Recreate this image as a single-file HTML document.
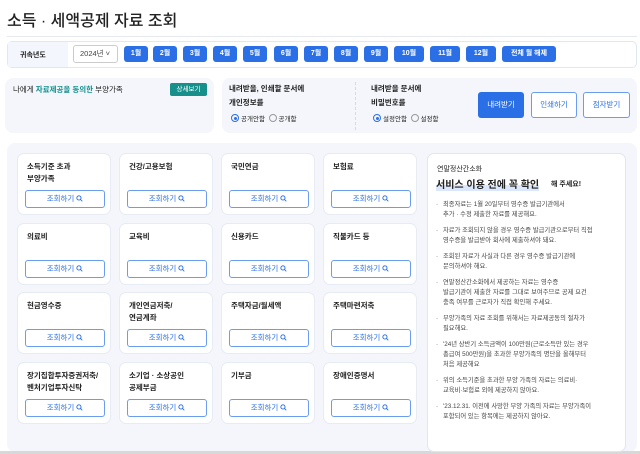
<!DOCTYPE html>
<html><head><meta charset="utf-8"><style>
*{box-sizing:border-box;margin:0;padding:0}
body{width:640px;height:454px;background:#fff;font-family:"Liberation Sans","Noto Sans CJK KR",sans-serif;color:#222;position:relative;overflow:hidden}
.a{position:absolute}
.t{font-size:16px;font-weight:500;left:7px;top:7px}
.hr{left:7px;right:3px;top:36px;height:1px;background:#e6e9ef}
.bar{left:7px;top:41px;width:630px;height:27px;border:1px solid #e0e6f2;border-radius:5px;background:#fff}
.barl{left:8px;top:42px;width:60px;height:25px;background:#f3f6fc}
.mb{top:46px;height:16px;background:#2a6fe6;color:#fff;font-size:7px;font-weight:bold;border-radius:3px;text-align:center;line-height:16px}
.pan{background:#f4f6fb;border-radius:8px}
.card{background:#fff;border-radius:7px;width:94px;height:62px;border:1px solid #e6ebf4}
.card .n{position:absolute;left:9px;top:7px;font-size:7.5px;font-weight:600;line-height:12px}
.card .b{position:absolute;left:7px;top:36px;width:80px;height:18px;border:1px solid #6a9cf0;border-radius:3px;color:#2a6fe6;font-size:7.5px;text-align:center;line-height:16px}
.card .b svg{vertical-align:-1px;margin-left:2px}
.r{display:inline-block;width:8px;height:8px;border:1px solid #999;border-radius:50%;vertical-align:-1px;margin-right:2px;position:relative}
.r.on{border-color:#2a6fe6}
.r.on:after{content:"";position:absolute;left:1.5px;top:1.5px;width:3px;height:3px;border-radius:50%;background:#2a6fe6}
.ul li{list-style:none;font-size:6.3px;color:#444;line-height:10px;margin-bottom:6px;padding-left:7px;position:relative}
.ul li:before{content:"·";position:absolute;left:0}
</style></head><body>
<svg width="0" height="0" style="position:absolute"><defs><symbol id="q" viewBox="0 0 10 10"><circle cx="4.2" cy="4.2" r="3" fill="none" stroke="#2a6fe6" stroke-width="1.3"/><path d="M6.4 6.4L9 9" stroke="#2a6fe6" stroke-width="1.3"/></symbol></defs></svg>
<div class="a t">소득 · 세액공제 자료 조회</div>
<div class="a hr"></div>
<div class="a bar"></div>
<div class="a barl"></div>
<div class="a" style="left:20px;top:50px;font-size:7px;font-weight:bold">귀속년도</div>
<div class="a" style="left:73px;top:45px;width:45px;height:18px;border:1px solid #ccc;border-radius:3px;font-size:7.5px;line-height:16px;padding-left:6px;color:#444">2024년 ˅</div>
<div class="a mb" style="left:124px;width:24px">1월</div>
<div class="a mb" style="left:153px;width:24px">2월</div>
<div class="a mb" style="left:183px;width:24px">3월</div>
<div class="a mb" style="left:213px;width:24px">4월</div>
<div class="a mb" style="left:243px;width:24px">5월</div>
<div class="a mb" style="left:274px;width:24px">6월</div>
<div class="a mb" style="left:304px;width:24px">7월</div>
<div class="a mb" style="left:334px;width:24px">8월</div>
<div class="a mb" style="left:364px;width:24px">9월</div>
<div class="a mb" style="left:394px;width:30px">10월</div>
<div class="a mb" style="left:430px;width:30px">11월</div>
<div class="a mb" style="left:466px;width:30px">12월</div>
<div class="a mb" style="left:502px;width:54px">전체 월 해제</div>

<div class="a pan" style="left:5px;top:78px;width:209px;height:55px"></div>
<div class="a" style="left:13px;top:84px;font-size:7.5px">나에게 <span style="color:#12908e;font-weight:600">자료제공을 동의한</span> 부양가족</div>
<div class="a" style="left:170px;top:83px;width:37px;height:13px;background:#17908c;color:#fff;font-size:6.5px;border-radius:2px;text-align:center;line-height:13px">상세보기</div>

<div class="a pan" style="left:222px;top:78px;width:415px;height:55px"></div>
<div class="a" style="left:229px;top:82px;font-size:7.5px;font-weight:600;line-height:14px">내려받을, 인쇄할 문서에<br>개인정보를</div>
<div class="a" style="left:231px;top:113px;font-size:6.5px"><span class="r on"></span>공개안함 &nbsp;<span class="r"></span>공개함</div>
<div class="a" style="left:355px;top:82px;height:48px;border-left:1px dashed #d5dbe6"></div>
<div class="a" style="left:371px;top:82px;font-size:7.5px;font-weight:600;line-height:14px">내려받을 문서에<br>비밀번호를</div>
<div class="a" style="left:373px;top:113px;font-size:6.5px"><span class="r on"></span>설정안함 &nbsp;<span class="r"></span>설정함</div>
<div class="a" style="left:478px;top:92px;width:46px;height:26px;background:#2a6fe6;color:#fff;border-radius:3px;font-size:7.5px;text-align:center;line-height:26px">내려받기</div>
<div class="a" style="left:531px;top:92px;width:46px;height:26px;border:1px solid #6a9cf0;color:#2a6fe6;background:#fff;border-radius:3px;font-size:7.5px;text-align:center;line-height:24px">인쇄하기</div>
<div class="a" style="left:583px;top:92px;width:47px;height:26px;border:1px solid #6a9cf0;color:#2a6fe6;background:#fff;border-radius:3px;font-size:7.5px;text-align:center;line-height:24px">점자받기</div>

<div class="a pan" style="left:7px;top:143px;width:630px;height:309px"></div>
<div class="a" style="left:0;top:451px;width:640px;height:3px;background:#d8d8d8"></div>

<div class="a card" style="left:17px;top:153px"><div class="n">소득기준 초과<br>부양가족</div><div class="b">조회하기<svg width="7" height="7"><use href="#q"/></svg></div></div>
<div class="a card" style="left:119px;top:153px"><div class="n">건강/고용보험</div><div class="b">조회하기<svg width="7" height="7"><use href="#q"/></svg></div></div>
<div class="a card" style="left:221px;top:153px"><div class="n">국민연금</div><div class="b">조회하기<svg width="7" height="7"><use href="#q"/></svg></div></div>
<div class="a card" style="left:323px;top:153px"><div class="n">보험료</div><div class="b">조회하기<svg width="7" height="7"><use href="#q"/></svg></div></div>
<div class="a card" style="left:17px;top:223px"><div class="n">의료비</div><div class="b">조회하기<svg width="7" height="7"><use href="#q"/></svg></div></div>
<div class="a card" style="left:119px;top:223px"><div class="n">교육비</div><div class="b">조회하기<svg width="7" height="7"><use href="#q"/></svg></div></div>
<div class="a card" style="left:221px;top:223px"><div class="n">신용카드</div><div class="b">조회하기<svg width="7" height="7"><use href="#q"/></svg></div></div>
<div class="a card" style="left:323px;top:223px"><div class="n">직불카드 등</div><div class="b">조회하기<svg width="7" height="7"><use href="#q"/></svg></div></div>
<div class="a card" style="left:17px;top:292px"><div class="n">현금영수증</div><div class="b">조회하기<svg width="7" height="7"><use href="#q"/></svg></div></div>
<div class="a card" style="left:119px;top:292px"><div class="n">개인연금저축/<br>연금계좌</div><div class="b">조회하기<svg width="7" height="7"><use href="#q"/></svg></div></div>
<div class="a card" style="left:221px;top:292px"><div class="n">주택자금/월세액</div><div class="b">조회하기<svg width="7" height="7"><use href="#q"/></svg></div></div>
<div class="a card" style="left:323px;top:292px"><div class="n">주택마련저축</div><div class="b">조회하기<svg width="7" height="7"><use href="#q"/></svg></div></div>
<div class="a card" style="left:17px;top:362px"><div class="n">장기집합투자증권저축/<br>벤처기업투자신탁</div><div class="b">조회하기<svg width="7" height="7"><use href="#q"/></svg></div></div>
<div class="a card" style="left:119px;top:362px"><div class="n">소기업 · 소상공인<br>공제부금</div><div class="b">조회하기<svg width="7" height="7"><use href="#q"/></svg></div></div>
<div class="a card" style="left:221px;top:362px"><div class="n">기부금</div><div class="b">조회하기<svg width="7" height="7"><use href="#q"/></svg></div></div>
<div class="a card" style="left:323px;top:362px"><div class="n">장애인증명서</div><div class="b">조회하기<svg width="7" height="7"><use href="#q"/></svg></div></div>

<div class="a" style="left:427px;top:153px;width:199px;height:299px;background:#fff;border:1px solid #e0e6f2;border-radius:7px"></div>
<div class="a" style="left:437px;top:164px;font-size:7px">연말정산간소화</div>
<div class="a" style="left:436px;top:176px;font-size:10px;font-weight:600;background:linear-gradient(transparent 60%,#dbe7fb 60%)">서비스 이용 전에 꼭 확인</div>
<div class="a" style="left:551px;top:179px;font-size:7px;font-weight:600">해 주세요!</div>
<ul class="a ul" style="left:436px;top:200px;width:186px">
<li>최종자료는 1월 20일부터 영수증 발급기관에서<br>추가 · 수정 제출한 자료를 제공해요.</li>
<li>자료가 조회되지 않을 경우 영수증 발급기관으로부터 직접<br>영수증을 발급받아 회사에 제출하셔야 돼요.</li>
<li>조회된 자료가 사실과 다른 경우 영수증 발급기관에<br>문의하셔야 해요.</li>
<li>연말정산간소화에서 제공하는 자료는 영수증<br>발급기관이 제출한 자료를 그대로 보여주므로 공제 요건<br>충족 여부를 근로자가 직접 확인해 주세요.</li>
<li>부양가족의 자료 조회를 위해서는 자료제공동의 절차가<br>필요해요.</li>
<li>'24년 상반기 소득금액이 100만원(근로소득만 있는 경우<br>총급여 500만원)을 초과한 부양가족의 명단을 올해부터<br>처음 제공해요</li>
<li>위의 소득기준을 초과한 부양 가족의 자료는 의료비·<br>교육비·보험료 외에 제공하지 않아요.</li>
<li>'23.12.31. 이전에 사망한 부양 가족의 자료는 부양가족이<br>포함되어 있는 항목에는 제공하지 않아요.</li>
</ul>
</body></html>
